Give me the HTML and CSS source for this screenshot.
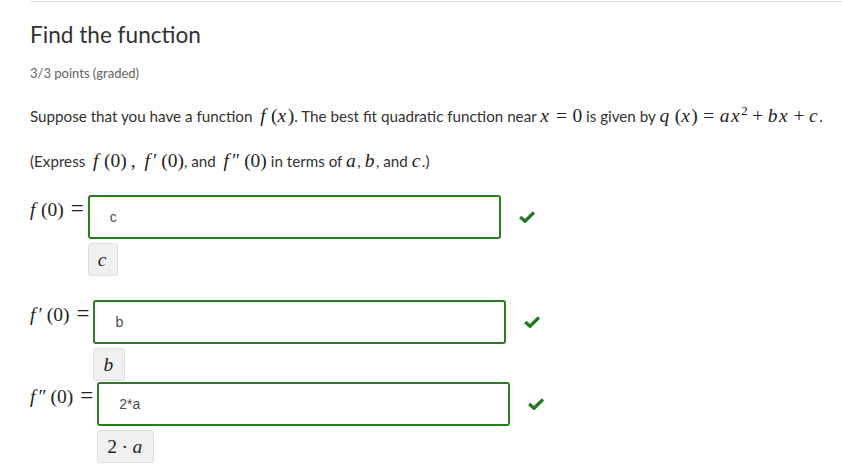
FILE: index.html
```html
<!DOCTYPE html>
<html>
<head>
<meta charset="utf-8">
<link rel="stylesheet" href="styles.css">
</head>
<body>
<div class="page">
  <div class="rule"></div>
  <h2 class="title">Find the function</h2>
  <div class="meta">3/3 points (graded)</div>
  <p class="q">Suppose that you have a function&nbsp; <span class="m"><i>f</i><span class="ap"></span>(<i>x</i>)</span>. The best fit quadratic function near <span class="m"><i>x</i><span class="rel">=</span>0</span> is given by <span class="m"><i>q</i><span class="ap"></span>(<i>x</i>)<span class="rel">=</span><i>a</i><i>x</i><sup class="sup">2</sup><span class="bin">+</span><i>b</i><i>x</i><span class="bin">+</span><i>c</i></span>.</p>
  <p class="q">(Express&nbsp; <span class="m"><i>f</i><span class="ap"></span>(0)<span class="ap"></span>,<span class="ap"></span> <i>f</i><span class="pr">′</span><span class="ap"></span>(0)</span>, and&nbsp; <span class="m"><i>f</i><span class="pr">″</span><span class="ap"></span>(0)</span> in terms of <span class="m"><i>a</i></span>, <span class="m"><i>b</i></span>, and <span class="m"><i>c</i></span>.)</p>

  <div class="answers">
    <div class="answer a1">
      <span class="label"><i>f</i><span class="ap"></span>(0)<span class="eq">=</span></span>
      <div class="field">
        <div class="inrow">
          <div class="input">c</div>
          <svg class="check" viewBox="0 0 16 12"><path d="M1.2 6 L6 10.2 L15 1.4" fill="none" stroke="#1f7a1f" stroke-width="3.4"/></svg>
        </div>
        <div class="preview"><i>c</i></div>
      </div>
    </div>
    <div class="answer a2">
      <span class="label"><i>f</i><span class="pr">′</span><span class="ap"></span>(0)<span class="eq">=</span></span>
      <div class="field">
        <div class="inrow">
          <div class="input">b</div>
          <svg class="check" viewBox="0 0 16 12"><path d="M1.2 6 L6 10.2 L15 1.4" fill="none" stroke="#1f7a1f" stroke-width="3.4"/></svg>
        </div>
        <div class="preview"><i>b</i></div>
      </div>
    </div>
    <div class="answer a3">
      <span class="label"><i>f</i><span class="pr">″</span><span class="ap"></span>(0)<span class="eq">=</span></span>
      <div class="field">
        <div class="inrow">
          <div class="input">2*a</div>
          <svg class="check" viewBox="0 0 16 12"><path d="M1.2 6 L6 10.2 L15 1.4" fill="none" stroke="#1f7a1f" stroke-width="3.4"/></svg>
        </div>
        <div class="preview">2<span class="bin">·</span><i>a</i></div>
      </div>
    </div>
  </div>
</div>
</body>
</html>
```
FILE: styles.css
```css
* { box-sizing: border-box; }
html, body { margin: 0; background: #fff; }
body { font-family: Lato, "Open Sans", sans-serif; color: #313131; }
.page { padding: 1px 0 0 30px; }
.rule { height: 1px; background: #dcdcdc; }
.title { font-size: 22.6px; font-weight: 400; line-height: 30px; margin: 18px 0 0; color: #313131; }
.meta { font-size: 13px; line-height: 20px; margin-top: 13px; color: #646464; }
.q { font-size: 15.2px; line-height: 24px; margin: 21px 0 0; }
.m { font-family: "Liberation Serif", serif; font-size: 19.5px; line-height: 20px; white-space: nowrap; color: #222; }
.m i, .label i, .preview i { font-style: italic; padding-right: 1.5px; }
.pr { margin-left: 1.5px; }
.ap { display: inline-block; width: 4px; }
.rel { margin: 0 5.5px; }
.bin { margin: 0 4.5px; }
.sup { font-size: 13px; line-height: 0; vertical-align: 0.55em; }
.answers { margin-top: 22px; }
.answer { display: flex; align-items: flex-start; }
.label { font-family: "Liberation Serif", serif; font-size: 19.5px; line-height: 28px; padding-right: 4px; color: #222; }
.eq { display: inline-block; margin-left: 7px; font-size: 23px; line-height: 28px; }
.field { display: flex; flex-direction: column; align-items: flex-start; }
.inrow { display: flex; align-items: center; gap: 18px; }
.input { width: 413px; height: 44px; border: 2px solid #2a7d1f; border-radius: 3px; padding-left: 20px; display: flex; align-items: center; font-family: "Liberation Sans", Arial, sans-serif; font-size: 14px; color: #4b4b4b; }
.check { width: 16px; height: 12px; }
.preview { margin-top: 4px; height: 33px; padding: 0 9px; background: #f0f0f0; border: 1px solid #dedede; border-radius: 3px; display: flex; align-items: center; font-family: "Liberation Serif", serif; font-size: 19.5px; color: #222; }
.a2 { margin-top: 24px; }
.a3 { margin-top: 1px; }
```
